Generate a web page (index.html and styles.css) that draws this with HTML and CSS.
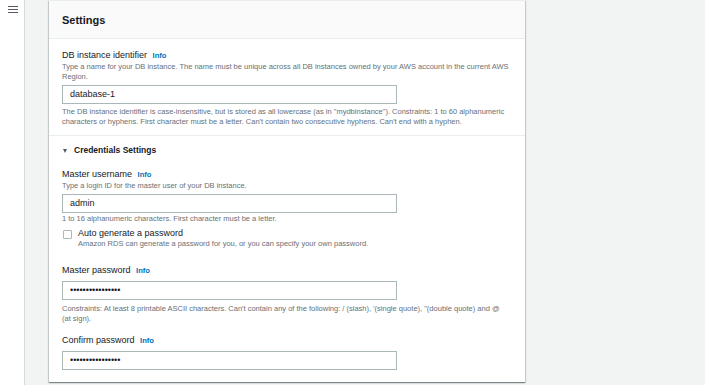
FILE: index.html
```html
<!DOCTYPE html>
<html>
<head>
<meta charset="utf-8">
<link rel="stylesheet" href="styles.css">
</head>
<body>
<div class="sidebar">
  <svg class="menu" width="10" height="7" viewBox="0 0 10 7"><path d="M0 0.5H10M0 3.5H10M0 6.5H10" stroke="#545b64" stroke-width="1.1"/></svg>
</div>
<main class="main">
  <section class="card">
    <header class="card-header">Settings</header>
    <div class="section">
      <div class="label">DB instance identifier <span class="info">Info</span></div>
      <div class="desc">Type a name for your DB instance. The name must be unique across all DB instances owned by your AWS account in the current AWS Region.</div>
      <div class="input">database-1</div>
      <div class="hint">The DB instance identifier is case-insensitive, but is stored as all lowercase (as in "mydbinstance"). Constraints: 1 to 60 alphanumeric characters or hyphens. First character must be a letter. Can't contain two consecutive hyphens. Can't end with a hyphen.</div>
    </div>
    <div class="section section-cred">
      <div class="expander"><span class="caret"></span>Credentials Settings</div>
      <div class="label label-user">Master username <span class="info">Info</span></div>
      <div class="desc desc-user">Type a login ID for the master user of your DB instance.</div>
      <div class="input">admin</div>
      <div class="hint hint-tight">1 to 16 alphanumeric characters. First character must be a letter.</div>
      <div class="check-row">
        <span class="checkbox"></span>
        <div class="check-text">
          <div class="check-title">Auto generate a password</div>
          <div class="desc">Amazon RDS can generate a password for you, or you can specify your own password.</div>
        </div>
      </div>
      <div class="label label-pw">Master password <span class="info">Info</span></div>
      <div class="input input-pw">••••••••••••••••</div>
      <div class="hint hint-pw">Constraints: At least 8 printable ASCII characters. Can't contain any of the following: / (slash), '(single quote), "(double quote) and @ (at sign).</div>
      <div class="label label-confirm">Confirm password <span class="info">Info</span></div>
      <div class="input input-pw">••••••••••••••••</div>
    </div>
  </section>
</main>
</body>
</html>
```
FILE: styles.css
```css
html, body {
  margin: 0;
  padding: 0;
}
body {
  width: 705px;
  height: 385px;
  overflow: hidden;
  display: flex;
  font-family: "Liberation Sans", Arial, sans-serif;
  color: #16191f;
  background: #f2f3f3;
}
.sidebar {
  width: 25px;
  flex: none;
  background: #ffffff;
  border-right: 1px solid #d5dbdb;
  display: flex;
  justify-content: center;
  align-items: flex-start;
  padding-top: 6px;
  box-sizing: border-box;
  padding-left: 1px;
}
.main {
  flex: 1;
  padding: 1px 0 0 24px;
}
.card {
  width: 476px;
  background: #ffffff;
  box-shadow: 0 1px 1px 0 rgba(0, 28, 36, 0.3), 1px 1px 1px 0 rgba(0, 28, 36, 0.15), -1px 1px 1px 0 rgba(0, 28, 36, 0.15);
  border-top: 1px solid #eaeded;
  margin-top: -1px;
}
.card-header {
  height: 37px;
  background: #fafafa;
  border-bottom: 1px solid #eaeded;
  display: flex;
  align-items: center;
  padding: 0 13px;
  font-size: 11px;
  font-weight: bold;
  color: #16191f;
}
.section {
  padding: 10px 12px 8px 13px;
}
.section-cred {
  border-top: 1px solid #eaeded;
  padding-top: 8px;
  padding-bottom: 12px;
}
.label {
  font-size: 9px;
  line-height: 12px;
  color: #16191f;
}
.info {
  font-size: 7.6px;
  font-weight: bold;
  color: #0073bb;
  margin-left: 3px;
}
.desc {
  font-size: 7.5px;
  line-height: 10px;
  color: #687078;
}
.hint {
  font-size: 7.5px;
  line-height: 10px;
  color: #687078;
  margin-top: 3px;
}
.hint-pw {
  margin-top: 4px;
  max-width: 442px;
}
.input {
  margin-top: 3px;
  width: 335px;
  height: 19px;
  box-sizing: border-box;
  border: 1px solid #aab7b8;
  padding: 0 7px;
  font-size: 9px;
  line-height: 17px;
  color: #16191f;
}
.input-pw {
  margin-top: 4px;
  font-size: 9px;
  letter-spacing: 0;
}
.expander {
  font-size: 8.5px;
  font-weight: bold;
  line-height: 12px;
  color: #16191f;
  display: flex;
  align-items: center;
}
.caret {
  width: 0;
  height: 0;
  border-left: 2.5px solid transparent;
  border-right: 2.5px solid transparent;
  border-top: 4px solid #545b64;
  margin: 1px 7px 0 1px;
}
.label-user {
  margin-top: 12px;
}
.desc-user {
  margin-top: 0;
}
.hint-tight {
  margin-top: 1px;
}
.check-row {
  display: flex;
  margin-top: 4px;
}
.checkbox {
  width: 9px;
  height: 9px;
  box-sizing: border-box;
  border: 1px solid #aab7b8;
  border-radius: 1px;
  margin: 2px 6px 0 1px;
  flex: none;
}
.check-title {
  font-size: 9px;
  line-height: 11px;
  color: #16191f;
}
.label-pw {
  margin-top: 15px;
}
.label-confirm {
  margin-top: 10px;
}
```
